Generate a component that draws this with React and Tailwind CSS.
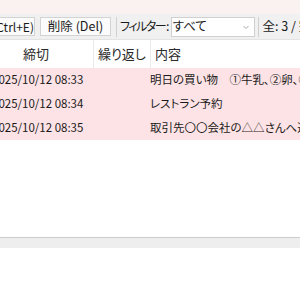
import React from "react";

const rows = [
  { due: "2025/10/12 08:33", repeat: "", text: "明日の買い物　①牛乳、②卵、③パン" },
  { due: "2025/10/12 08:34", repeat: "", text: "レストラン予約" },
  { due: "2025/10/12 08:35", repeat: "", text: "取引先〇〇会社の△△さんへ連絡" },
];

function App() {
  return (
    <div
      className="w-[300px] h-[300px] overflow-hidden bg-white text-[12px] text-[#1a1a1a] [font-feature-settings:'palt']"
      style={{ fontFamily: '"Noto Sans CJK JP", "Noto Sans", sans-serif' }}
    >
      <div className="h-[14px] bg-[#faf1f1]" />

      {/* toolbar */}
      <div className="h-[25px] bg-[#f0f0f0] flex items-center whitespace-nowrap text-[12.5px]">
        <div className="shrink-0 ml-[-30px] h-[19px] w-[65px] border border-[#d3d3d3] bg-[#fbfbfb] flex items-center justify-end pr-0 text-[12px]">
          (Ctrl+E)
        </div>
        <div className="shrink-0 ml-[5px] h-[19px] w-[71px] border border-[#d3d3d3] bg-[#fbfbfb] flex items-center justify-center">
          削除 (Del)
        </div>
        <div className="shrink-0 ml-[5px] w-px h-[20px] bg-[#d0d0d0]" />
        <div className="shrink-0 ml-[3px] flex">
          <span className="tracking-[-1.5px] text-[12px]">フィルター</span>
          <span className="ml-[1px]">:</span>
        </div>
        <div className="shrink-0 ml-[1px] h-[20px] w-[84px] border border-[#d0d0d0] bg-white flex items-center pl-[1px] justify-between">
          <span>すべて</span>
          <svg width="8" height="6" viewBox="0 0 8 6" className="mr-[4px]">
            <path d="M1.5 2 L4 4.5 L6.5 2" stroke="#a8a8a8" fill="none" strokeWidth="1" />
          </svg>
        </div>
        <div className="shrink-0 ml-[3px] w-px h-[20px] bg-[#d0d0d0]" />
        <div className="shrink-0 ml-[4px]">全: 3 / 完了: 0</div>
      </div>
      <div className="h-[1px] bg-[#e3e3e3]" />

      {/* header */}
      <div className="h-[28px] flex items-center whitespace-nowrap text-[13px] text-[#2a2a2a]">
        <div className="shrink-0 w-[93px] pl-[23px]">締切</div>
        <div className="shrink-0 w-px h-full bg-[#eaeaea]" />
        <div className="shrink-0 w-[56px] pl-[4px]">繰り返し</div>
        <div className="shrink-0 w-px h-full bg-[#eaeaea]" />
        <div className="shrink-0 pl-[4px]">内容</div>
      </div>

      {/* rows */}
      {rows.map((r) => (
        <div key={r.due} className="h-[24px] bg-[#fde3e5] flex items-center whitespace-nowrap overflow-hidden text-[11.5px]">
          <div className="shrink-0 w-[93px] ml-[-8px]">{r.due}</div>
          <div className="shrink-0 w-[62px] pl-[10px]">{r.repeat}</div>
          <div className="shrink-0 pl-[3px]">{r.text}</div>
        </div>
      ))}

      <div className="h-[97px]" />
      <div className="h-[1px] bg-[#cdcdcd]" />
      <div className="h-[10px] bg-[#eeeeee]" />
    </div>
  );
}

export default App;
